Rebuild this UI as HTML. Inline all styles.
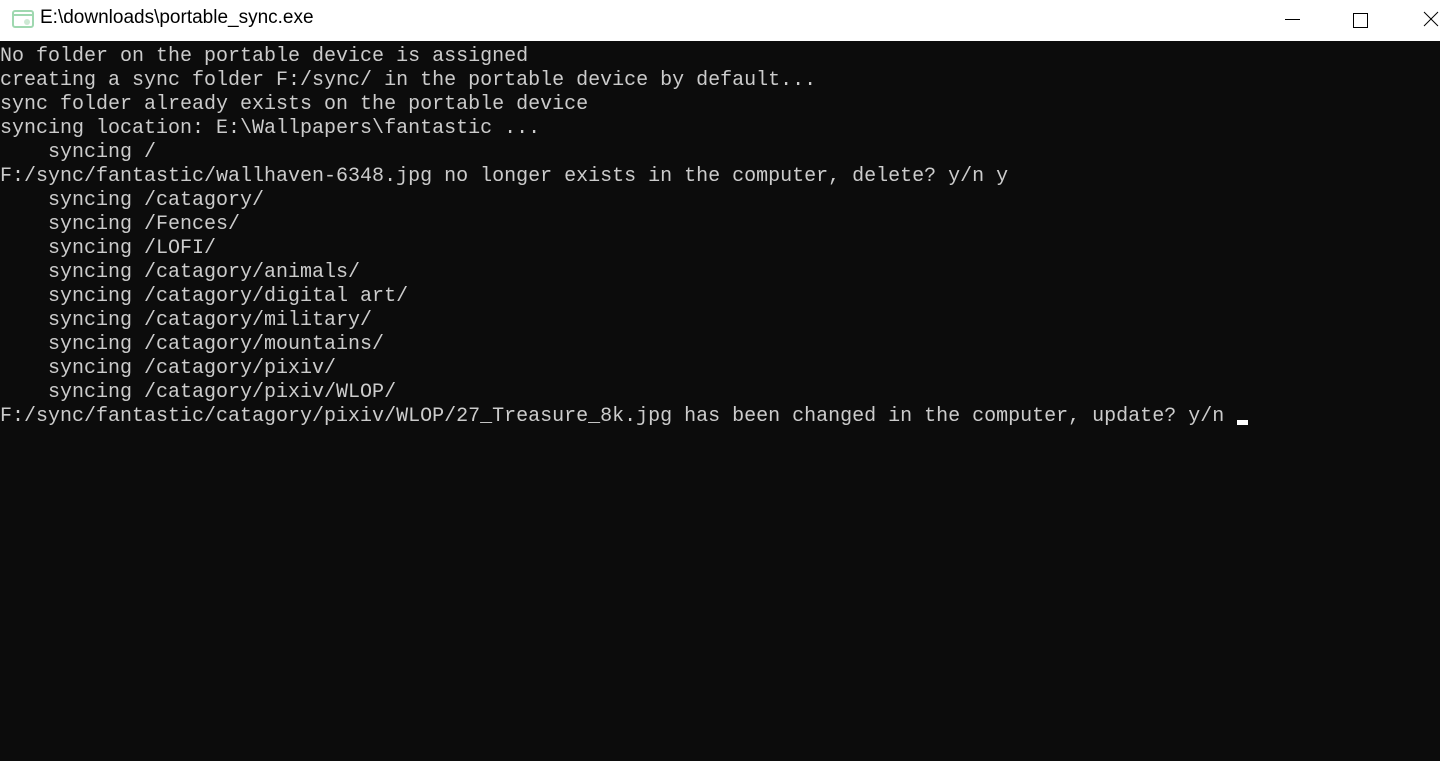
<!DOCTYPE html>
<html><head><style>
body{margin:0;width:1440px;height:761px;overflow:hidden;background:#0c0c0c;font-family:"Liberation Sans",sans-serif}
.tb{position:absolute;left:0;top:0;width:1440px;height:41px;background:#fff}
.title{position:absolute;left:40px;top:7px;font-size:19px;color:#000}
.term{position:absolute;left:0;top:45px;margin:0;font-family:"Liberation Mono","Noto Sans CJK SC",monospace;font-size:20px;line-height:24px;color:#cccccc;white-space:pre}
.cur{position:absolute;left:1237px;top:420px;width:11px;height:5px;background:#fff}
</style></head><body>
<div class="tb">
<svg style="position:absolute;left:12px;top:10px" width="22" height="18" viewBox="0 0 22 18"><rect x="1" y="1" width="20" height="16" rx="2" fill="none" stroke="#9fd8b0" stroke-width="2"/><line x1="1" y1="5" x2="21" y2="5" stroke="#9fd8b0" stroke-width="2"/><circle cx="15" cy="12" r="3" fill="#cde9d4"/></svg>
<div class="title">E:\downloads\portable_sync.exe</div>
<svg style="position:absolute;left:1280px;top:10px" width="160" height="20"><line x1="5" y1="9.5" x2="20" y2="9.5" stroke="#000"/><rect x="73.5" y="3.5" width="14" height="14" fill="none" stroke="#000"/></svg>
<svg style="position:absolute;left:1420px;top:10px" width="20" height="20"><line x1="4" y1="2" x2="18" y2="16" stroke="#000"/><line x1="18" y1="2" x2="4" y2="16" stroke="#000"/></svg>
</div>
<div class="term">No folder on the portable device is assigned
creating a sync folder F:/sync/ in the portable device by default...
sync folder already exists on the portable device
syncing location: E:\Wallpapers\fantastic ...
    syncing /
F:/sync/fantastic/wallhaven-6348.jpg no longer exists in the computer, delete? y/n y
    syncing /catagory/
    syncing /Fences/
    syncing /LOFI/
    syncing /catagory/animals/
    syncing /catagory/digital art/
    syncing /catagory/military/
    syncing /catagory/mountains/
    syncing /catagory/pixiv/
    syncing /catagory/pixiv/WLOP/
F:/sync/fantastic/catagory/pixiv/WLOP/27_Treasure_8k.jpg has been changed in the computer, update? y/n</div>
<div class="cur"></div>
</body></html>
